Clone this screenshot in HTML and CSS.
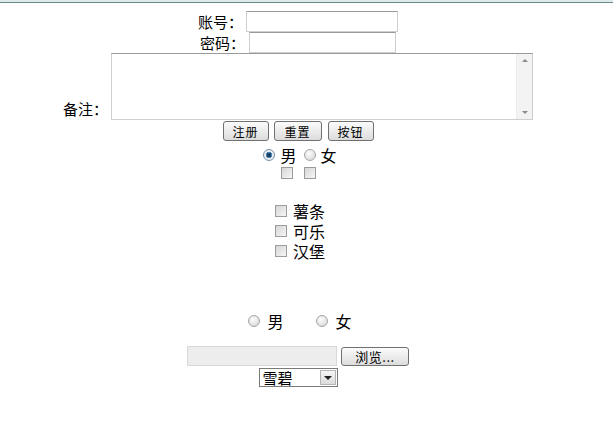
FILE: index.html
```html
<!DOCTYPE html>
<html lang="zh-CN">
<head>
  <meta charset="UTF-8" />
  <title>注册</title>
  <link rel="stylesheet" href="styles.css">
</head>
<body>
  <div class="topbar"></div>
  <form class="page">
    <div class="row row-account">
      <label>账号：</label>
      <input type="text" class="field field-account">
    </div>
    <div class="row row-password">
      <label>密码：</label>
      <input type="password" class="field field-password">
    </div>
    <div class="row row-note">
      <label>备注：</label>
      <div class="textarea">
        <textarea></textarea>
        <div class="scrollbar">
          <span class="arrow up"></span>
          <span class="arrow down"></span>
        </div>
      </div>
    </div>
    <div class="row row-buttons">
      <button type="submit" class="btn">注册</button>
      <button type="reset" class="btn btn-wide">重置</button>
      <button type="button" class="btn">按钮</button>
    </div>
    <div class="row row-sex">
      <input type="radio" name="sex" class="radio" checked>
      <span class="opt">男</span>
      <input type="radio" name="sex" class="radio">
      <span class="opt">女</span>
    </div>
    <div class="row row-checks">
      <input type="checkbox" class="check">
      <input type="checkbox" class="check">
    </div>
    <div class="foods">
      <div class="row food"><input type="checkbox" class="check"><span>薯条</span></div>
      <div class="row food"><input type="checkbox" class="check"><span>可乐</span></div>
      <div class="row food"><input type="checkbox" class="check"><span>汉堡</span></div>
    </div>
    <div class="row row-sex2">
      <input type="radio" name="sex2" class="radio">
      <span class="opt">男</span>
      <input type="radio" name="sex2" class="radio">
      <span class="opt">女</span>
    </div>
    <div class="row row-file">
      <div class="file-field"></div>
      <button type="button" class="btn btn-browse">浏览...</button>
    </div>
    <div class="row row-select">
      <div class="select">
        <span class="select-text">雪碧</span>
        <span class="select-arrow"></span>
      </div>
    </div>
  </form>
</body>
</html>
```

FILE: styles.css
```css
body {
  margin: 0;
  background: #fff;
  color: #000;
  font-family: "Noto Sans CJK SC", "DejaVu Sans", sans-serif;
  font-size: 15px;
}
.topbar {
  height: 2px;
  background: #dfeae8;
  border-bottom: 1px solid #6b8a8e;
}
.page {
  width: 596px;
  padding-top: 8px;
  display: flex;
  flex-direction: column;
  align-items: center;
}
.row {
  display: flex;
  align-items: center;
}
label {
  font-size: 15px;
  line-height: 21px;
}
.field {
  box-sizing: border-box;
  height: 21px;
  margin: 0;
  padding: 0 2px;
  border: 1px solid #cfcfcf;
  border-top-color: #9a9a9a;
  background: #fff;
  outline: none;
}
.row-account label { margin-right: 3px; }
.field-account { width: 152px; }
.row-password label { margin-right: 4px; }
.field-password { width: 147px; }

.row-note {
  align-items: flex-end;
}
.row-note label {
  margin-right: 3px;
  margin-bottom: 1px;
}
.textarea {
  box-sizing: border-box;
  width: 422px;
  height: 67px;
  display: flex;
  border: 1px solid #cfcfcf;
  border-top-color: #9a9a9a;
}
.textarea textarea {
  flex: 1;
  border: none;
  resize: none;
  outline: none;
  padding: 0;
  margin: 0;
}
.scrollbar {
  width: 15px;
  background: #f3f3f3;
  border-left: 1px solid #ececec;
  display: flex;
  flex-direction: column;
  justify-content: space-between;
  align-items: center;
  padding: 5px 0;
}
.arrow {
  width: 0;
  height: 0;
  border-left: 3px solid transparent;
  border-right: 3px solid transparent;
}
.arrow.up { border-bottom: 3px solid #8a8a8a; }
.arrow.down { border-top: 3px solid #8a8a8a; }

.btn {
  box-sizing: border-box;
  height: 20px;
  width: 46px;
  margin: 0;
  padding: 0;
  font-family: "Noto Sans CJK SC", sans-serif;
  font-size: 12px;
  line-height: 17px;
  letter-spacing: 1px;
  color: #000;
  border: 1px solid #707070;
  border-radius: 3px;
  background: linear-gradient(#fbfbfb, #ececec 50%, #dcdcdc);
}
.row-buttons {
  margin-top: 1px;
  gap: 5px;
}
.btn-wide { width: 48px; margin-right: 1px; }

.radio, .check {
  appearance: none;
  margin: 0;
  box-sizing: border-box;
  width: 12px;
  height: 12px;
}
.radio {
  border-radius: 50%;
  border: 1px solid #a6a6a6;
  background: radial-gradient(circle at 40% 35%, #fdfdfd, #d2d2d2);
}
.radio:checked {
  background: radial-gradient(circle, #1c3f64 0 2px, #4f86b8 2.5px 3px, #e9eef3 3.5px);
  border-color: #7a8ea5;
}
.check {
  border: 1px solid #9c9c9c;
  background: linear-gradient(135deg, #d6d6d6, #f6f6f6);
}
.opt {
  font-size: 16px;
  line-height: 20px;
}
.row-sex {
  margin-top: 4px;
  height: 20px;
  padding-left: 4px;
}
.row-sex .radio { margin-right: 3px; }
.row-sex .opt:first-of-type { margin-right: 7px; }
.row-sex .radio + .opt { margin-left: 2px; }

.row-checks {
  height: 16px;
  gap: 11px;
}

.foods {
  margin-top: 20px;
  display: flex;
  flex-direction: column;
  padding-left: 4px;
}
.food {
  height: 20px;
  font-size: 16px;
  line-height: 20px;
}
.food span { margin-left: 6px; }

.row-sex2 {
  margin-top: 50px;
  height: 20px;
  padding-left: 4px;
}
.row-sex2 .radio { margin-right: 7px; }
.row-sex2 .opt:first-of-type { margin-right: 32px; }
.row-sex2 .opt:last-of-type { margin-left: 1px; }

.row-file {
  margin-top: 15px;
  gap: 4px;
}
.file-field {
  box-sizing: border-box;
  width: 150px;
  height: 20px;
  background: #ededed;
  border: 1px solid #d8d8d8;
}
.btn-browse {
  width: 68px;
  height: 19px;
  font-size: 13px;
  letter-spacing: 0.5px;
}

.row-select {
  margin-top: 2px;
}
.select {
  box-sizing: border-box;
  width: 79px;
  height: 19px;
  display: flex;
  align-items: center;
  justify-content: space-between;
  border: 1px solid #7a7a7a;
  background: #fff;
}
.select-text {
  font-size: 15px;
  line-height: 17px;
  padding-left: 3px;
}
.select-arrow {
  box-sizing: border-box;
  width: 16px;
  height: 15px;
  margin-right: 1px;
  border: 1px solid #b5b5b5;
  background: linear-gradient(#f6f6f6, #dcdcdc);
  display: flex;
  align-items: center;
  justify-content: center;
}
.select-arrow::after {
  content: "";
  border-left: 4px solid transparent;
  border-right: 4px solid transparent;
  border-top: 4px solid #222;
}
```
